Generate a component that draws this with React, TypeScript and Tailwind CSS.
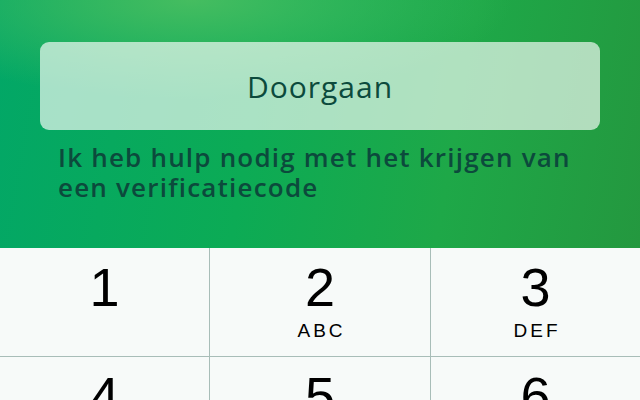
import React from 'react';

const keys: { digit: string; letters?: string }[] = [
  { digit: '1' },
  { digit: '2', letters: 'ABC' },
  { digit: '3', letters: 'DEF' },
  { digit: '4', letters: 'GHI' },
  { digit: '5', letters: 'JKL' },
  { digit: '6', letters: 'MNO' },
];

export default function App() {
  return (
    <div className="w-[640px] h-[400px] overflow-hidden flex flex-col bg-[#f7faf9]">
      <div className="h-[248px] shrink-0 flex flex-col px-[40px] pt-[42px] bg-[radial-gradient(ellipse_50%_40%_at_30%_0%,#45bd60_0%,rgba(69,189,96,0)_100%),linear-gradient(100deg,#02a767_0%,#0cab55_40%,#1ea848_70%,#24983f_100%)]">
        <button
          type="button"
          className="h-[88px] w-full rounded-[9px] bg-white/65 text-[#0c4a3c] text-[30px] tracking-[1px] font-['Open_Sans',sans-serif] flex items-center justify-center"
        >
          Doorgaan
        </button>
        <p className="mt-[12px] pl-[18px] pr-[10px] text-[26px] leading-[30px] font-semibold tracking-[1.2px] text-[#0c4a3c] font-['Open_Sans',sans-serif]">
          Ik heb hulp nodig met het krijgen van een verificatiecode
        </p>
      </div>

      <div className="grid grid-cols-[209px_1fr_209px] flex-1 font-['Liberation_Sans',Arial,sans-serif] text-black">
        {keys.map((k, i) => (
          <div
            key={k.digit}
            className={`h-[109px] flex flex-col items-center pt-[12px] border-b border-[#a8bdb8] ${
              i % 3 === 1 ? 'border-x' : ''
            }`}
          >
            <span className="text-[54px] leading-none h-[54px]">{k.digit}</span>
            {k.letters && (
              <span className="mt-[7px] text-[19px] leading-none tracking-[3px] pl-[3px]">{k.letters}</span>
            )}
          </div>
        ))}
      </div>
    </div>
  );
}
